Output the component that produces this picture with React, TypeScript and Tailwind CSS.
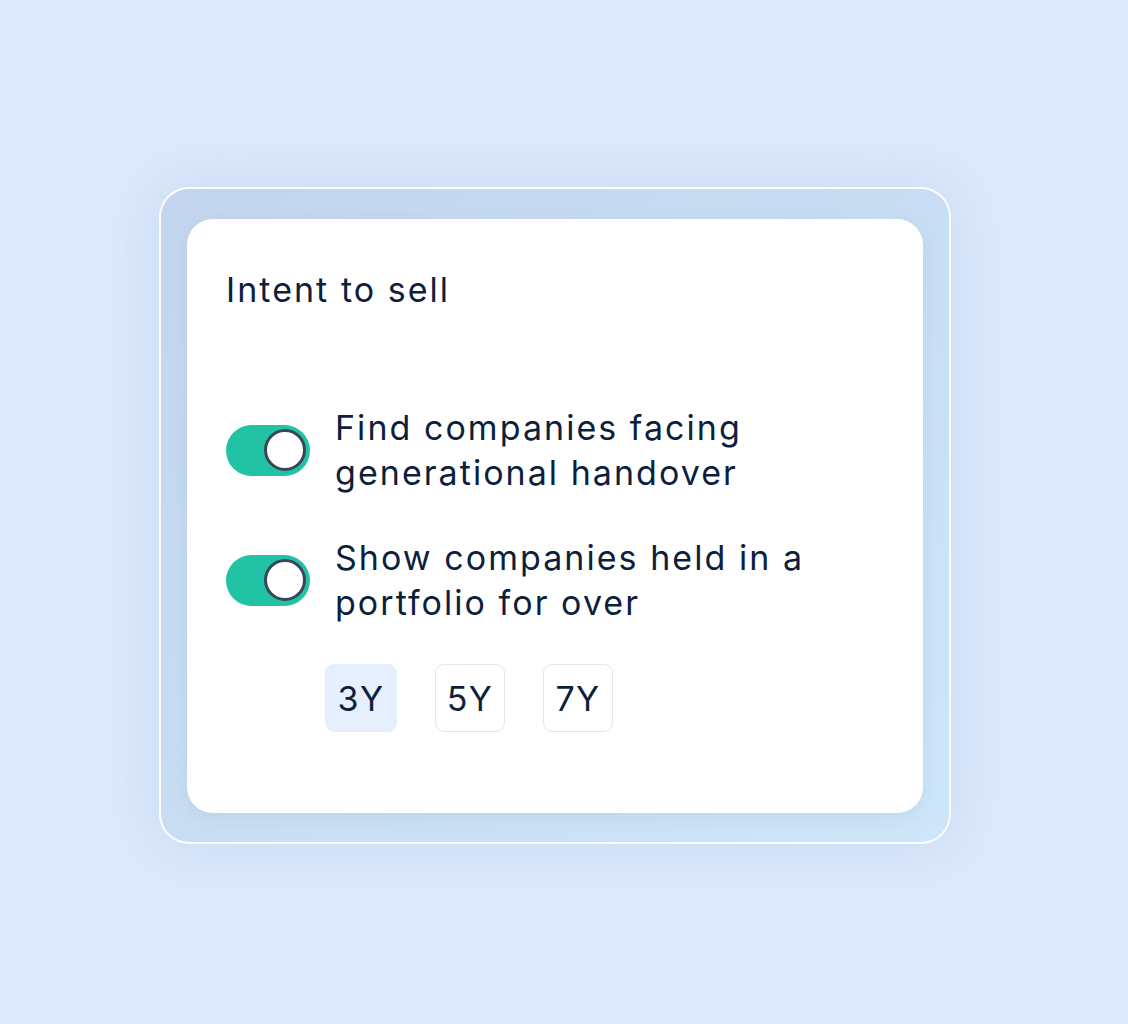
import React from "react"

function Toggle() {
  return (
    <div className="flex h-[51px] w-[84px] shrink-0 items-center justify-end rounded-full bg-[#22c3a5] pr-[4px]">
      <div className="h-[42px] w-[42px] rounded-full border-[3px] border-[#384659] bg-white" />
    </div>
  )
}

function Option({ label, active }: { label: string; active?: boolean }) {
  return (
    <div
      className={
        active
          ? "flex h-[68px] w-[72px] items-center justify-center rounded-[9px] border border-[#e5effd] bg-[#e5effd] text-[34px] tracking-[0.04em] text-[#0d1f3c]"
          : "flex h-[68px] w-[70px] items-center justify-center rounded-[9px] border border-[#e3e6ea] bg-white text-[34px] tracking-[0.04em] text-[#0d1f3c]"
      }
    >
      {label}
    </div>
  )
}

export default function App() {
  return (
    <div
      className="min-h-[1024px] bg-[#dde9fb] pl-[159px] pt-[187px]"
      style={{ fontFamily: "Inter, 'Noto Sans', sans-serif" }}
    >
      <div className="w-[792px] rounded-[30px] border-2 border-white/90 bg-gradient-to-br from-[#c3d5ee] to-[#cde6f8] px-[26px] pb-[29px] pt-[30px] shadow-[0_0_60px_rgba(180,205,240,0.6)]">
        <div className="flex flex-col rounded-[26px] bg-white pb-[81px] pl-[39px] pr-[30px] pt-[50px] shadow-[0_4px_16px_rgba(120,150,190,0.15)]">
          <h1 className="text-[34px] font-normal leading-[41px] tracking-[0.06em] text-[#0d1f3c]">Intent to sell</h1>
          <div className="mt-[95px] flex items-center gap-[25px]">
            <Toggle />
            <p className="text-[34px] leading-[45px] tracking-[0.06em] text-[#0d1f3c]">
              Find companies facing
              <br />
              generational handover
            </p>
          </div>
          <div className="mt-[40px] flex items-center gap-[25px]">
            <Toggle />
            <p className="text-[34px] leading-[45px] tracking-[0.06em] text-[#0d1f3c]">
              Show companies held in a
              <br />
              portfolio for over
            </p>
          </div>
          <div className="ml-[99px] mt-[39px] flex gap-[38px]">
            <Option label="3Y" active />
            <Option label="5Y" />
            <Option label="7Y" />
          </div>
        </div>
      </div>
    </div>
  )
}
